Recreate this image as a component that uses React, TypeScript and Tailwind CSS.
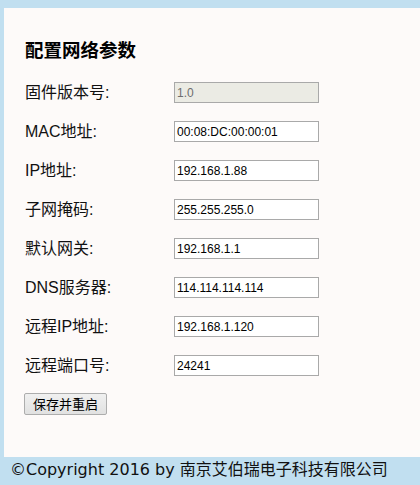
const FIELDS = [
  { label: "固件版本号:", value: "1.0", disabled: true },
  { label: "MAC地址:", value: "00:08:DC:00:00:01" },
  { label: "IP地址:", value: "192.168.1.88" },
  { label: "子网掩码:", value: "255.255.255.0" },
  { label: "默认网关:", value: "192.168.1.1" },
  { label: "DNS服务器:", value: "114.114.114.114" },
  { label: "远程IP地址:", value: "192.168.1.120" },
  { label: "远程端口号:", value: "24241" },
];

const sans = "font-['Liberation_Sans','Noto_Sans_CJK_SC',sans-serif]";

export default function App() {
  return (
    <div className="h-[485px] w-[420px] overflow-hidden bg-[#c1dff0] pt-[8px]">
      <div className="ml-[4px] h-[449px] bg-[#fdfaf9] pl-[21px] pt-[31px]">
        <h3
          className={`${sans} text-[18.5px] font-bold leading-[24px] text-black`}
        >
          配置网络参数
        </h3>

        <div className="mt-[10px] flex flex-col">
          {FIELDS.map((f) => (
            <div key={f.label} className="flex h-[39px] items-center">
              <span
                className={`${sans} w-[149px] text-[16px] leading-[20px] text-[#111]`}
              >
                {f.label}
              </span>
              <input
                type="text"
                defaultValue={f.value}
                disabled={f.disabled}
                className={`${sans} h-[21px] w-[145px] border border-[#a9a9a9] px-[2px] text-[12px] outline-none ${
                  f.disabled
                    ? "bg-[#ebebe4] text-[#6d6d6d]"
                    : "bg-white text-black"
                }`}
              />
            </div>
          ))}
        </div>

        <button
          type="button"
          className={`${sans} mt-[8px] ml-[-1px] h-[22px] w-[83px] rounded-[2px] border border-[#adadad] bg-gradient-to-b from-[#f0f0f0] to-[#e1e1e1] text-[13px] leading-none text-black`}
        >
          保存并重启
        </button>
      </div>

      <div className="pl-[10px] pt-[1px] font-['DejaVu_Sans','Noto_Sans_CJK_SC',sans-serif] text-[16px] leading-[24px] text-[#111]">
        ©Copyright 2016 by 南京艾伯瑞电子科技有限公司
      </div>
    </div>
  );
}
